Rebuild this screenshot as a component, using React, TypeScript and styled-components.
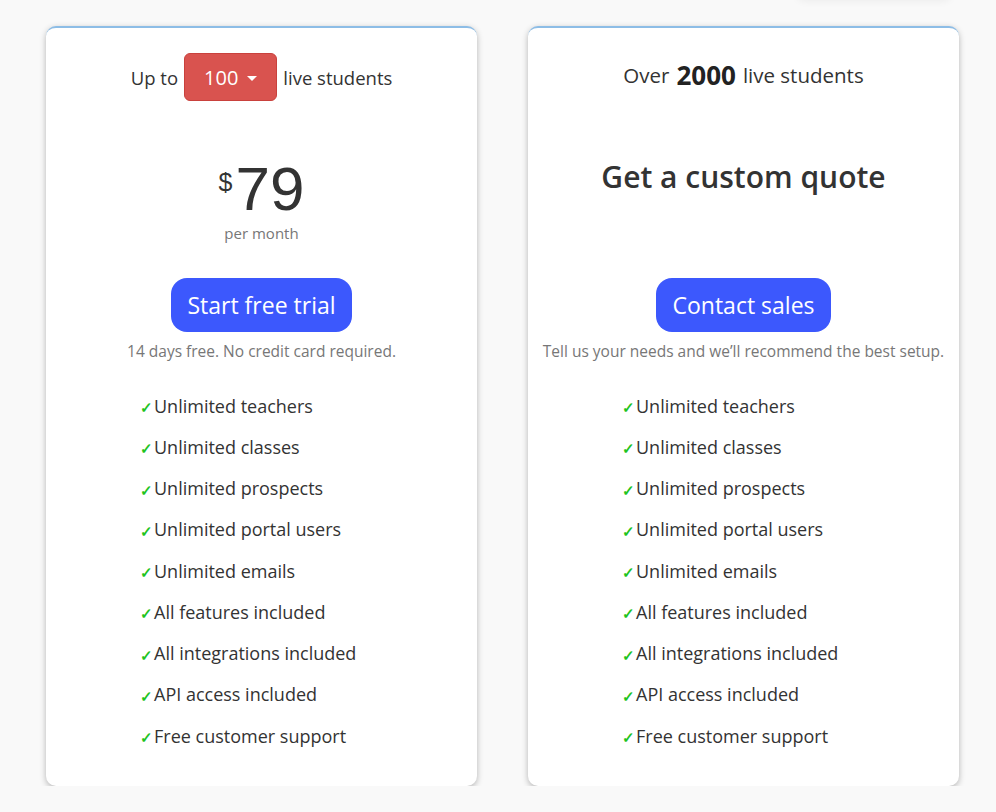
import styled, { createGlobalStyle } from "styled-components"

const GlobalStyle = createGlobalStyle`
    body {
        margin: 0;
        background: #f9f9f9;
        font-family: "Open Sans", "Noto Sans", sans-serif;
        color: #333;
    }
`

const Page = styled.div`
    padding: 0 37px 0 46px;
`

const TopStrip = styled.div`
    display: flex;
    justify-content: flex-end;
    height: 26px;
    padding-right: 8px;
`

const HiddenTab = styled.div`
    width: 154px;
    height: 40px;
    margin-top: -40px;
    background: #f9f9f9;
    border-radius: 8px;
    box-shadow: 0 1px 8px rgba(0, 0, 0, 0.06);
`

const Plans = styled.div`
    display: grid;
    grid-template-columns: 431px 431px;
    gap: 51px;
`

const Card = styled.div`
    display: flex;
    flex-direction: column;
    align-items: center;
    background: #fff;
    border-top: 2px solid #8dbde6;
    border-radius: 10px;
    box-shadow: 0 2px 6px rgba(0, 0, 0, 0.28);
    padding: 25px 0 30px;
`

const Headline = styled.div<{ $size: number; $shift?: number }>`
    display: flex;
    align-items: center;
    justify-content: center;
    gap: 6px;
    height: 48px;
    margin-top: ${(p) => p.$shift ?? 0}px;
    margin-bottom: ${(p) => -(p.$shift ?? 0)}px;
    font-size: ${(p) => p.$size}px;
    color: #333;
`

const Strong = styled.b`
    font-size: 26px;
    font-weight: 700;
    color: #222;
    margin: 0 1px;
`

const SeatPicker = styled.button`
    display: flex;
    align-items: center;
    gap: 9px;
    height: 48px;
    padding: 0 19px;
    background: #d9534f;
    border: 1px solid #c9413d;
    border-radius: 6px;
    color: #fff;
    font-family: inherit;
    font-size: 20px;
`

const Caret = styled.span`
    width: 0;
    height: 0;
    border-left: 5px solid transparent;
    border-right: 5px solid transparent;
    border-top: 5px solid #fff;
    margin-top: 2px;
`

const PriceArea = styled.div<{ $offset: number }>`
    display: flex;
    flex-direction: column;
    align-items: center;
    height: 177px;
    padding-top: ${(p) => p.$offset}px;
    box-sizing: border-box;
`

const Amount = styled.div`
    display: flex;
    align-items: flex-start;
    font-family: "Liberation Sans", Arial, sans-serif;
    font-size: 62px;
    line-height: 62px;
    color: #333;
`

const Currency = styled.span`
    font-size: 25px;
    line-height: 1;
    margin: 12px 3px 0 0;
`

const Period = styled.div`
    margin-top: 4px;
    font-size: 15px;
    line-height: 18px;
    color: #777;
`

const Quote = styled.div`
    font-size: 30px;
    font-weight: 600;
    line-height: 34px;
    color: #333;
`

const Cta = styled.button`
    height: 54px;
    padding: 0 16px;
    background: #3c58fd;
    border: none;
    border-radius: 16px;
    color: #fff;
    font-family: inherit;
    font-size: 23px;
`

const Note = styled.div`
    margin-top: 9px;
    font-size: 15.5px;
    line-height: 20px;
    color: #777;
`

const Features = styled.ul`
    align-self: stretch;
    list-style: none;
    margin: 24px 0 0;
    padding: 0 0 0 94px;
`

const Feature = styled.li`
    display: flex;
    align-items: center;
    height: 41.25px;
    font-size: 18px;
    color: #333;
`

const Tick = styled.span`
    color: #1fc41f;
    font-size: 15px;
    font-weight: 700;
    width: 14px;
    margin-top: 3px;
`

const features = [
    "Unlimited teachers",
    "Unlimited classes",
    "Unlimited prospects",
    "Unlimited portal users",
    "Unlimited emails",
    "All features included",
    "All integrations included",
    "API access included",
    "Free customer support",
]

const FeatureList = () => (
    <Features>
        {features.map((f) => (
            <Feature key={f}>
                <Tick>✓</Tick>
                {f}
            </Feature>
        ))}
    </Features>
)

const App = () => {
    return (
        <>
            <GlobalStyle />
            <Page>
                <TopStrip>
                    <HiddenTab />
                </TopStrip>
                <Plans>
                    <Card>
                        <Headline $size={18.5}>
                            Up to
                            <SeatPicker>
                                100 <Caret />
                            </SeatPicker>
                            live students
                        </Headline>
                        <PriceArea $offset={57}>
                            <Amount>
                                <Currency>$</Currency>79
                            </Amount>
                            <Period>per month</Period>
                        </PriceArea>
                        <Cta>Start free trial</Cta>
                        <Note>14 days free. No credit card required.</Note>
                        <FeatureList />
                    </Card>
                    <Card>
                        <Headline $size={20.5} $shift={-2}>
                            Over <Strong>2000</Strong> live students
                        </Headline>
                        <PriceArea $offset={59}>
                            <Quote>Get a custom quote</Quote>
                        </PriceArea>
                        <Cta>Contact sales</Cta>
                        <Note>Tell us your needs and we’ll recommend the best setup.</Note>
                        <FeatureList />
                    </Card>
                </Plans>
            </Page>
        </>
    )
}

export default App
